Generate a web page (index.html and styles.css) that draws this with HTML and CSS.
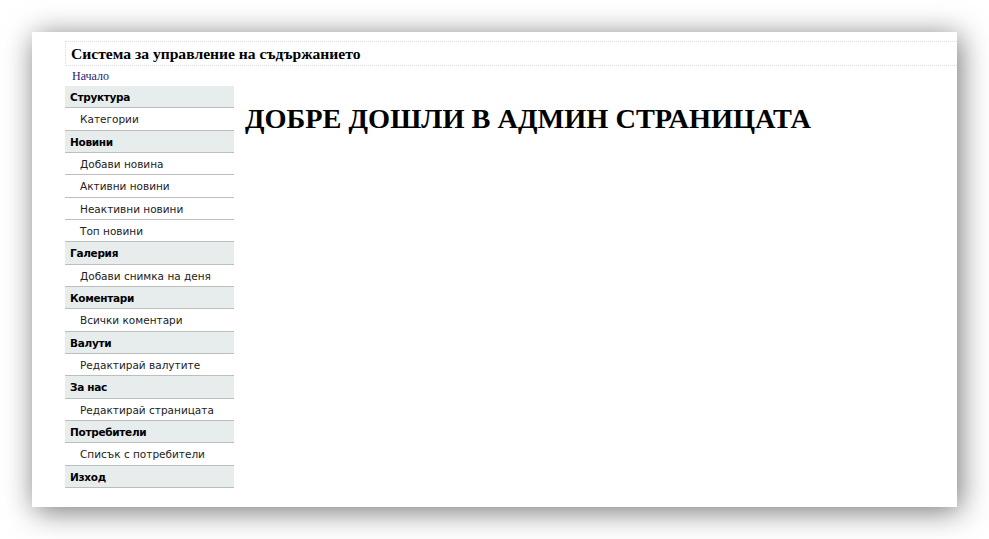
FILE: index.html
```html
<!DOCTYPE html>
<html lang="bg">
<head>
<meta charset="utf-8">
<title>Админ</title>
<link rel="stylesheet" href="styles.css">
</head>
<body>
<div class="panel">
  <div class="header">Система за управление на съдържанието</div>
  <div class="crumbs"><a href="#">Начало</a></div>
  <div class="main">
    <ul class="menu">
      <li class="group">Структура</li>
      <li class="item">Категории</li>
      <li class="group">Новини</li>
      <li class="item">Добави новина</li>
      <li class="item">Активни новини</li>
      <li class="item">Неактивни новини</li>
      <li class="item">Топ новини</li>
      <li class="group">Галерия</li>
      <li class="item">Добави снимка на деня</li>
      <li class="group">Коментари</li>
      <li class="item">Всички коментари</li>
      <li class="group">Валути</li>
      <li class="item">Редактирай валутите</li>
      <li class="group">За нас</li>
      <li class="item">Редактирай страницата</li>
      <li class="group">Потребители</li>
      <li class="item">Списък с потребители</li>
      <li class="group">Изход</li>
    </ul>
    <div class="content">
      <h1 class="welcome">ДОБРЕ ДОШЛИ В АДМИН СТРАНИЦАТА</h1>
    </div>
  </div>
</div>
</body>
</html>
```

FILE: styles.css
```css
html, body {
  margin: 0;
  padding: 0;
  background: #ffffff;
}

body {
  font-family: "Liberation Serif", "Times New Roman", serif;
  width: 989px;
  height: 539px;
  overflow: hidden;
}

.panel {
  margin: 32px 0 0 32px;
  width: 892px;
  height: 466px;
  padding: 9px 0 0 33px;
  background: #ffffff;
  box-shadow: 3px 4px 28px rgba(0, 0, 0, 0.55);
}

.header {
  border: 1px dotted #dcdcdc;
  border-right: none;
  height: 23px;
  line-height: 23px;
  padding-left: 5px;
  font-size: 15.6px;
  font-weight: bold;
  color: #000;
}

.crumbs {
  height: 19px;
  line-height: 19px;
  padding: 1px 0 0 7px;
  font-size: 12px;
}

.crumbs a {
  color: #1c1c72;
  text-decoration: none;
}

.main {
  display: flex;
  align-items: flex-start;
  gap: 11px;
}

.menu {
  list-style: none;
  margin: 0;
  padding: 0;
  width: 169px;
  font-family: "DejaVu Sans", Verdana, sans-serif;
  font-size: 10.5px;
}

.menu li {
  height: 21.33px;
  line-height: 23px;
  border-bottom: 1px solid #bdbdbd;
  white-space: nowrap;
  overflow: hidden;
}

.group {
  background: #e7eded;
  font-weight: bold;
  color: #000;
  padding-left: 5px;
  letter-spacing: -0.3px;
}

.item {
  background: #fff;
  color: #222;
  padding-left: 15px;
}

.content {
  flex: 1;
}

.welcome {
  margin: 17px 0 0 0;
  font-size: 28.35px;
  font-weight: bold;
  color: #000;
  line-height: 32px;
}
```
